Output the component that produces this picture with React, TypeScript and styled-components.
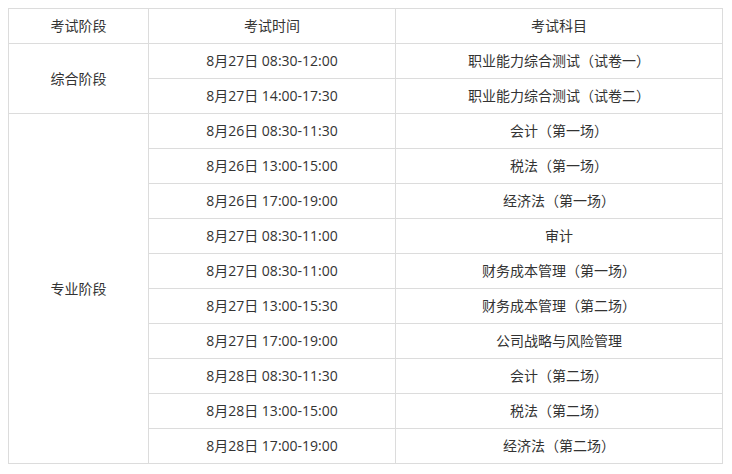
import React from 'react'
import styled, { createGlobalStyle } from 'styled-components'

const GlobalStyle = createGlobalStyle`
  body {
    margin: 8px;
    background: #fff;
    font-family: "Open Sans", "Noto Sans CJK SC", sans-serif;
    color: #333;
  }
`

const Table = styled.table`
  width: 715px;
  border-collapse: collapse;
  table-layout: fixed;
  font-size: 14px;
`

const Cell = styled.td<{ w?: number }>`
  border: 1px solid #dcdcdc;
  height: 34px;
  padding: 0;
  text-align: center;
  vertical-align: middle;
  line-height: 20px;
  ${props => props.w ? `width: ${props.w}px;` : ''}
`

type Row = { time: string; subject: string }

const general: Row[] = [
  { time: '8月27日 08:30-12:00', subject: '职业能力综合测试（试卷一）' },
  { time: '8月27日 14:00-17:30', subject: '职业能力综合测试（试卷二）' },
]

const pro: Row[] = [
  { time: '8月26日 08:30-11:30', subject: '会计（第一场）' },
  { time: '8月26日 13:00-15:00', subject: '税法（第一场）' },
  { time: '8月26日 17:00-19:00', subject: '经济法（第一场）' },
  { time: '8月27日 08:30-11:00', subject: '审计' },
  { time: '8月27日 08:30-11:00', subject: '财务成本管理（第一场）' },
  { time: '8月27日 13:00-15:30', subject: '财务成本管理（第二场）' },
  { time: '8月27日 17:00-19:00', subject: '公司战略与风险管理' },
  { time: '8月28日 08:30-11:30', subject: '会计（第二场）' },
  { time: '8月28日 13:00-15:00', subject: '税法（第二场）' },
  { time: '8月28日 17:00-19:00', subject: '经济法（第二场）' },
]

const Group = ({ name, rows }: { name: string; rows: Row[] }) => (
  <>
    {rows.map((r, i) => (
      <tr key={i}>
        {i === 0 && <Cell rowSpan={rows.length}>{name}</Cell>}
        <Cell>{r.time}</Cell>
        <Cell>{r.subject}</Cell>
      </tr>
    ))}
  </>
)

export default function App() {
  return (
    <>
      <GlobalStyle />
      <Table>
        <tbody>
          <tr>
            <Cell w={139}>考试阶段</Cell>
            <Cell w={246}>考试时间</Cell>
            <Cell>考试科目</Cell>
          </tr>
          <Group name="综合阶段" rows={general} />
          <Group name="专业阶段" rows={pro} />
        </tbody>
      </Table>
    </>
  )
}
